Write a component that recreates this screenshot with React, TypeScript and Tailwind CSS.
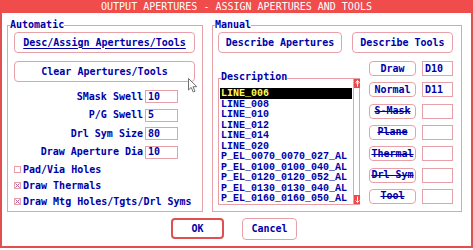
import type { FunctionComponent, ReactNode } from "react";

const font = {
  fontFamily: '"DejaVu Sans Mono", "Liberation Mono", monospace',
};

const items = [
  "LINE_006",
  "LINE_008",
  "LINE_010",
  "LINE_012",
  "LINE_014",
  "LINE_020",
  "P_EL_0070_0070_027_AL",
  "P_EL_0100_0100_040_AL",
  "P_EL_0120_0120_052_AL",
  "P_EL_0130_0130_040_AL",
  "P_EL_0160_0160_050_AL",
];

const fields = [
  { label: "SMask Swell", value: "10" },
  { label: "P/G Swell", value: "5" },
  { label: "Drl Sym Size", value: "80" },
  { label: "Draw Aperture Dia", value: "10" },
];

const checks = [
  { label: "Pad/Via Holes", on: false },
  { label: "Draw Thermals", on: true },
  { label: "Draw Mtg Holes/Tgts/Drl Syms", on: true },
];

const tools = [
  { label: "Draw", value: "D10", off: false },
  { label: "Normal", value: "D11", off: false },
  { label: "S-Mask", value: "", off: true },
  { label: "Plane", value: "", off: true },
  { label: "Thermal", value: "", off: true },
  { label: "Drl Sym", value: "", off: true },
  { label: "Tool", value: "", off: true },
];

const Btn: FunctionComponent<{ className: string; children: ReactNode }> = ({
  className,
  children,
}) => (
  <div
    className={`flex items-center justify-center rounded-[4px] border border-[#e8a0a8] text-[10px] font-bold leading-none text-[#0000a8] ${className}`}
  >
    {children}
  </div>
);

const Group: FunctionComponent<{
  label: string;
  className: string;
  children: ReactNode;
}> = ({ label, className, children }) => (
  <div className={`relative border border-[#e8a0a8] ${className}`}>
    <span className="absolute -top-[6px] left-[2px] bg-white text-[10px] font-bold leading-[10px] text-[#0000a8]">
      {label}
    </span>
    {children}
  </div>
);

const Check: FunctionComponent<{ on: boolean }> = ({ on }) => (
  <svg width="7" height="7" viewBox="0 0 7 7" className="shrink-0">
    <rect x="0.5" y="0.5" width="6" height="6" fill="white" stroke="#e8a0a8" />
    {on ? (
      <path d="M1.5 1.5 L5.5 5.5 M5.5 1.5 L1.5 5.5" stroke="#b060a0" strokeWidth="1" />
    ) : null}
  </svg>
);

const Arrow: FunctionComponent<{ up: boolean }> = ({ up }) => (
  <div className="flex h-[9px] w-[6px] items-center justify-center bg-[#f04848]">
    <svg width="5" height="7" viewBox="0 0 5 7">
      <path
        d={up ? "M2.5 0.5 V6.5 M0.5 2.5 L2.5 0.5 L4.5 2.5 M1 3 H4" : "M2.5 0.5 V6.5 M0.5 4.5 L2.5 6.5 L4.5 4.5"}
        stroke="white"
        strokeWidth="1"
        fill="none"
      />
    </svg>
  </div>
);

const App: FunctionComponent = () => (
  <div className="relative h-[250px] w-[473px] overflow-hidden bg-white" style={font}>
    <div className="flex h-[13px] items-center justify-center bg-[#f04c4c] text-[10px] leading-none text-white">
      OUTPUT APERTURES - ASSIGN APERTURES AND TOOLS
    </div>
    <div className="h-[235px] border-x-2 border-b-2 border-[#e05050]">
      <div className="flex gap-[9px] pl-[5px] pt-[12px]">
        <Group label="Automatic" className="h-[187px] w-[196px]">
          <div className="flex flex-col pl-[6px] pt-[6px]">
            <Btn className="h-[21px] w-[181px]">
              <span className="underline decoration-1 underline-offset-2">
                Desc/Assign Apertures/Tools
              </span>
            </Btn>
            <Btn className="mt-[8px] h-[21px] w-[181px]">Clear Apertures/Tools</Btn>
          </div>
          <div className="mt-[8px] flex flex-col gap-[5.67px]">
            {fields.map((f) => (
              <div key={f.label} className="flex h-[13px] items-center gap-[2px]">
                <span className="w-[135px] text-right text-[10px] font-bold leading-none text-[#0000a8]">
                  {f.label}
                </span>
                <div className="flex h-[13px] w-[33px] items-center border border-[#e8a0a8] pl-[2px] text-[10px] font-bold leading-none text-[#0000a8]">
                  {f.value}
                </div>
              </div>
            ))}
          </div>
          <div className="mt-[3px] flex flex-col pl-[6px]">
            {checks.map((c) => (
              <div key={c.label} className="flex h-[16px] items-center gap-[2px]">
                <Check on={c.on} />
                <span className="text-[10px] font-bold leading-none text-[#0000a8]">{c.label}</span>
              </div>
            ))}
          </div>
        </Group>
        <Group label="Manual" className="h-[187px] w-[250px]">
          <div className="flex gap-[10px] pl-[5px] pt-[6px]">
            <Btn className="h-[21px] w-[124px]">Describe Apertures</Btn>
            <Btn className="h-[21px] w-[101px]">Describe Tools</Btn>
          </div>
          <div className="flex items-start gap-[9px] pl-[5px]">
            <div className="relative mt-[25px] flex h-[127px] w-[142px]">
              <div className="h-full w-[136px] border border-[#e8a0a8] px-[1px] pt-[9px] font-['Liberation_Mono',monospace]">
                {items.map((it, i) => (
                  <div
                    key={it}
                    className={`h-[10.5px] px-[1px] pt-[1px] text-[10px] font-bold leading-[9px] ${
                      i === 0 ? "bg-black text-[#ffff50]" : "text-[#0000a8]"
                    }`}
                  >
                    {it}
                  </div>
                ))}
              </div>
              <div className="flex h-full w-[6px] flex-col justify-between border-y border-r border-[#e8a0a8]">
                <Arrow up />
                <Arrow up={false} />
              </div>
              <span className="absolute -top-[6px] left-[3px] bg-white text-[10px] font-bold leading-[10px] text-[#0000a8]">
                Description
              </span>
            </div>
            <div className="mt-[8px] flex flex-col gap-[6.33px]">
              {tools.map((t) => (
                <div key={t.label} className="flex gap-[6px]">
                  <Btn className="h-[15px] w-[47px]">
                    <span className={t.off ? "line-through" : ""}>{t.label}</span>
                  </Btn>
                  <div className="flex h-[15px] w-[31px] items-center border border-[#e8a0a8] pl-[2px] text-[10px] font-bold leading-none text-[#0000a8]">
                    {t.value}
                  </div>
                </div>
              ))}
            </div>
          </div>
        </Group>
      </div>
      <div className="mt-[6px] flex gap-[18px] pl-[169px]">
        <Btn className="h-[21px] w-[53px] border-2 border-[#e05050]">OK</Btn>
        <Btn className="h-[22px] w-[55px]">Cancel</Btn>
      </div>
    </div>
    <svg className="absolute left-[188px] top-[78px]" width="10" height="15" viewBox="0 0 10 15">
      <path
        d="M0.5 0.5 V12 L3.2 9.4 L5.2 14 L7 13.2 L5 8.7 H8.8 Z"
        fill="white"
        stroke="#707070"
        strokeWidth="1"
      />
    </svg>
  </div>
);

export default App;
